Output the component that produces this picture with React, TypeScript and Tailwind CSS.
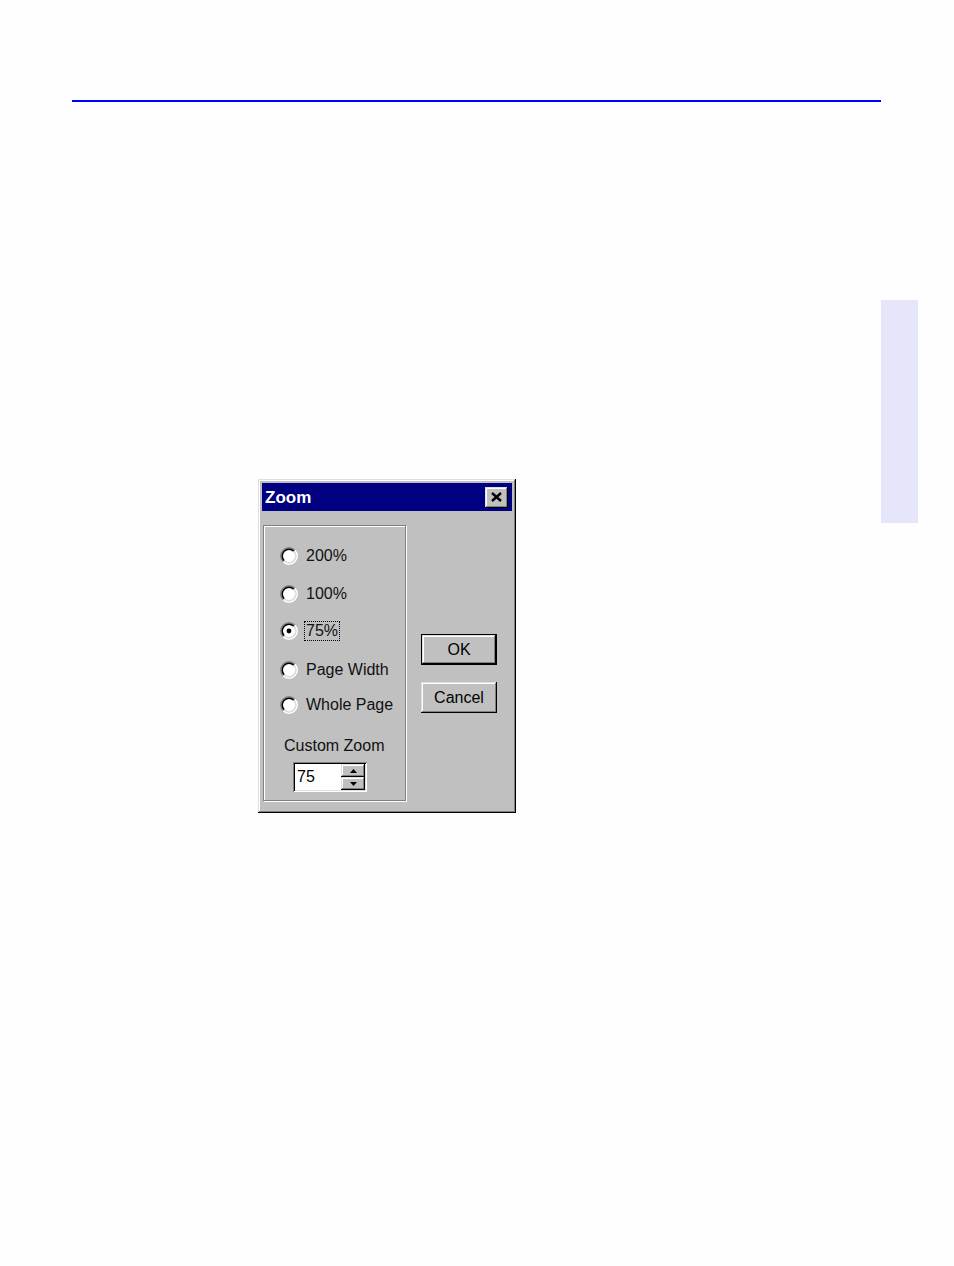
import React from 'react'

const raised =
  'shadow-[inset_-1px_-1px_#000000,inset_1px_1px_#dfdfdf,inset_-2px_-2px_#808080,inset_2px_2px_#ffffff]'
const sunken =
  'shadow-[inset_1px_1px_#808080,inset_-1px_-1px_#ffffff,inset_2px_2px_#000000,inset_-2px_-2px_#dfdfdf]'

function Radio({ checked }: { checked?: boolean }) {
  return (
    <svg width="18" height="18" viewBox="0 0 12 12" className="shrink-0">
      <circle cx="6" cy="6" r="4.2" fill="#ffffff" />
      <path d="M2.111 9.889 A5.5 5.5 0 0 1 9.889 2.111" fill="none" stroke="#808080" strokeWidth="1" />
      <path d="M9.889 2.111 A5.5 5.5 0 0 1 2.111 9.889" fill="none" stroke="#ffffff" strokeWidth="1" />
      <path d="M2.818 9.182 A4.5 4.5 0 0 1 9.182 2.818" fill="none" stroke="#000000" strokeWidth="1" />
      <path d="M9.182 2.818 A4.5 4.5 0 0 1 2.818 9.182" fill="none" stroke="#dfdfdf" strokeWidth="1" />
      {checked && <circle cx="6" cy="6" r="1.6" fill="#000000" />}
    </svg>
  )
}

const options = [
  { label: '200%', mt: 'mt-0' },
  { label: '100%', mt: 'mt-[18px]' },
  { label: '75%', mt: 'mt-[17px]', checked: true },
  { label: 'Page Width', mt: 'mt-[19px]' },
  { label: 'Whole Page', mt: 'mt-[15px]' },
]

function SpinArrow({ up }: { up?: boolean }) {
  return (
    <div className={`flex-1 bg-[#c0c0c0] ${raised} flex items-center justify-center`}>
      <svg width="7" height="4" viewBox="0 0 7 4">
        <path d={up ? 'M3.5 0 L7 4 L0 4 Z' : 'M0 0 L7 0 L3.5 4 Z'} fill="#000000" />
      </svg>
    </div>
  )
}

function ZoomDialog() {
  return (
    <div
      className={`w-[258px] h-[334px] bg-[#c0c0c0] ${raised} p-[4px] flex flex-col text-black`}
      style={{ fontFamily: '"Liberation Sans", Arial, sans-serif' }}
    >
      <div className="h-[28px] bg-[#000080] flex items-center justify-between pl-[3px] pr-[4px]">
        <span className="text-white font-bold text-[17px] leading-none">Zoom</span>
        <div className={`w-[23px] h-[21px] bg-[#c0c0c0] ${raised} flex items-center justify-center`}>
          <svg width="11" height="10" viewBox="0 0 11 10">
            <path d="M1 1 L10 9 M10 1 L1 9" stroke="#000000" strokeWidth="2.4" />
          </svg>
        </div>
      </div>

      <div className="flex mt-[14px] ml-[1px]">
        <div className="w-[143px] h-[276px] border border-[#808080] shadow-[1px_1px_#ffffff,inset_1px_1px_#ffffff] pt-[20px]">
          <div className="flex flex-col">
            {options.map(o => (
              <div key={o.label} className={`flex items-center h-[20px] pl-[16px] ${o.mt}`}>
                <Radio checked={o.checked} />
                <span
                  className={`ml-[8px] text-[16px] leading-none text-[#111111] ${
                    o.checked ? 'outline outline-1 outline-dotted outline-black outline-offset-[1px]' : ''
                  }`}
                >
                  {o.label}
                </span>
              </div>
            ))}
          </div>
          <div className="mt-[23px] pl-[20px] text-[16px] leading-none text-[#111111]">Custom Zoom</div>
          <div className={`mt-[8px] ml-[29px] w-[74px] h-[30px] bg-white ${sunken} flex p-[2px]`}>
            <span className="flex-1 pl-[2px] pt-[5px] text-[16px] leading-none">75</span>
            <div className="w-[24px] flex flex-col">
              <SpinArrow up />
              <SpinArrow />
            </div>
          </div>
        </div>

        <div className="flex flex-col ml-[15px] mt-[109px]">
          <div className="w-[76px] h-[31px] border border-black bg-[#c0c0c0] flex">
            <div className={`flex-1 ${raised} flex items-center justify-center text-[16px] leading-none`}>OK</div>
          </div>
          <div
            className={`mt-[17px] w-[76px] h-[31px] bg-[#c0c0c0] ${raised} flex items-center justify-center text-[16px] leading-none`}
          >
            Cancel
          </div>
        </div>
      </div>
    </div>
  )
}

export default function App() {
  return (
    <div className="w-[954px] h-[1266px] bg-[#fefefe] flex overflow-hidden">
      <div className="w-[881px] shrink-0 pt-[100px]">
        <div className="ml-[72px] h-[2px] bg-[#0000ff]" />
        <div className="ml-[258px] mt-[377px]">
          <ZoomDialog />
        </div>
      </div>
      <div className="pt-[300px]">
        <div className="w-[37px] h-[223px] bg-[#e6e6fa]" />
      </div>
    </div>
  )
}
